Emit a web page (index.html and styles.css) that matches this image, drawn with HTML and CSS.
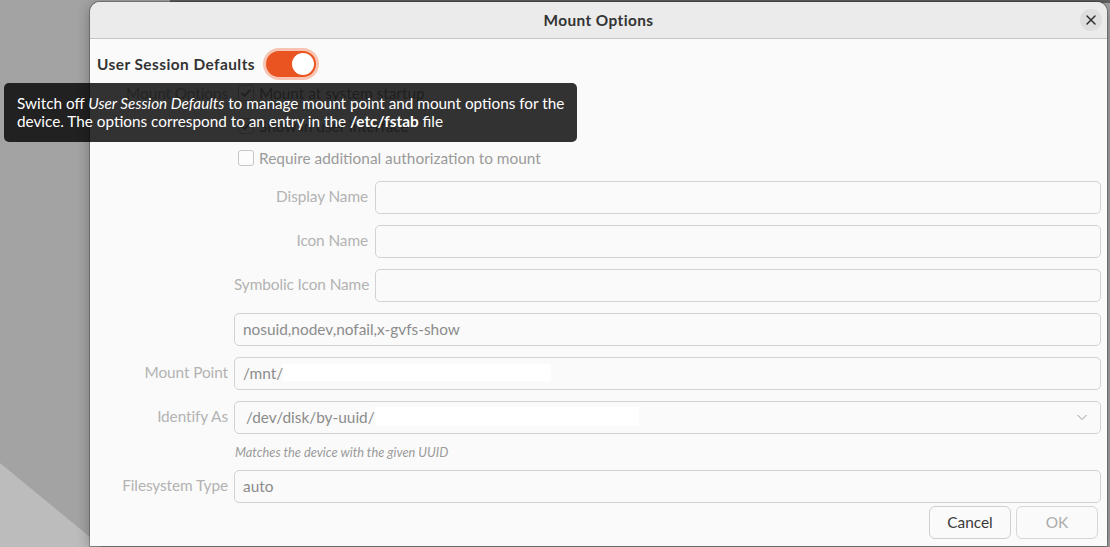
FILE: index.html
```html
<!DOCTYPE html>
<html>
<head>
<meta charset="utf-8">
<title>Mount Options</title>
<link rel="stylesheet" href="styles.css">
</head>
<body>
<div class="desktop">
  <div class="wedge"></div>
  <div class="backwin"></div>

  <div class="dialog">
    <header class="titlebar">
      <span></span>
      <span class="title">Mount Options</span>
      <button class="close" aria-label="Close">
        <svg width="16" height="16" viewBox="0 0 16 16"><path d="M4 4 L12 12 M12 4 L4 12" stroke="#2e2e2e" stroke-width="1.5" fill="none" stroke-linecap="round"/></svg>
      </button>
    </header>

    <div class="content">
      <div class="session-row">
        <span class="session-label">User Session Defaults</span>
        <span class="switch"><span class="knob"></span></span>
      </div>

      <div class="form">
        <div class="label top">Mount Options</div>
        <div class="checks">
          <div class="check"><span class="box"><svg width="14" height="14" viewBox="0 0 14 14"><path d="M2.5 7 L5.5 10 L11.5 3.5" stroke="#8a8a8a" stroke-width="1.5" fill="none"/></svg></span>Mount at system startup</div>
          <div class="check"><span class="box"><svg width="14" height="14" viewBox="0 0 14 14"><path d="M2.5 7 L5.5 10 L11.5 3.5" stroke="#8a8a8a" stroke-width="1.5" fill="none"/></svg></span>Show in user interface</div>
          <div class="check"><span class="box"></span>Require additional authorization to mount</div>
        </div>

        <div></div>
        <div class="named"><span class="label">Display Name</span><span class="entry"></span></div>

        <div></div>
        <div class="named"><span class="label">Icon Name</span><span class="entry"></span></div>

        <div></div>
        <div class="named"><span class="label">Symbolic Icon Name</span><span class="entry"></span></div>

        <div></div>
        <div class="entry">nosuid,nodev,nofail,x-gvfs-show</div>

        <div class="label">Mount Point</div>
        <div class="entry"><span>/mnt/</span><span class="redact r-mnt"></span></div>

        <div class="label">Identify As</div>
        <div class="entry combo"><span>/dev/disk/by-uuid/</span><span class="redact r-uuid"></span><span class="spacer"></span>
          <svg class="chev" width="12" height="12" viewBox="0 0 12 12"><path d="M1.5 4 L6 8.5 L10.5 4" stroke="#9a9a9a" stroke-width="1" fill="none"/></svg>
        </div>

        <div></div>
        <div class="hint">Matches the device with the given UUID</div>

        <div class="label">Filesystem Type</div>
        <div class="entry">auto</div>
      </div>

      <div class="actions">
        <button class="btn">Cancel</button>
        <button class="btn disabled">OK</button>
      </div>
    </div>
  </div>

  <div class="tooltip">Switch off <i>User Session Defaults</i> to manage mount point and mount options for the<br>device. The options correspond to an entry in the <b>/etc/fstab</b> file</div>
</div>
</body>
</html>
```

FILE: styles.css
```css
* { box-sizing: border-box; }
html, body { margin: 0; padding: 0; }
body {
  font-family: Lato, "Liberation Sans", sans-serif;
  font-size: 15.4px;
  overflow: hidden;
}
.desktop {
  position: relative;
  width: 1110px;
  height: 547px;
  background: #a3a3a3;
  overflow: hidden;
}
.wedge {
  position: absolute;
  inset: 0;
  background: #bcbcbc;
  clip-path: polygon(0 463px, 102px 547px, 0 547px);
}
.backwin {
  position: absolute;
  left: 170px;
  right: 0;
  top: 0;
  height: 3px;
  background: #606060;
}
.dialog {
  position: absolute;
  left: 90px;
  top: 2px;
  width: 1017px;
  height: 544px;
  background: #fafafa;
  border-radius: 10px 10px 0 0;
  box-shadow: 0 0 0 1px rgba(0,0,0,0.22), 0 2px 14px rgba(0,0,0,0.32);
  display: flex;
  flex-direction: column;
  overflow: hidden;
}
.titlebar {
  height: 37px;
  flex: none;
  background: #ebebeb;
  border-bottom: 1px solid #c4c4c4;
  display: grid;
  grid-template-columns: 1fr auto 1fr;
  align-items: center;
}
.title {
  font-weight: 700;
  color: #333;
  font-size: 15.4px;
  letter-spacing: 0.4px;
  padding-bottom: 1px;
}
.close {
  justify-self: end;
  margin-right: 5px;
  width: 22px;
  height: 22px;
  border: none;
  border-radius: 50%;
  background: #dedede;
  padding: 0;
  display: flex;
  align-items: center;
  justify-content: center;
}
.content {
  flex: 1;
  display: flex;
  flex-direction: column;
  padding: 11px 6px 0 7px;
}
.session-row {
  display: flex;
  align-items: center;
  height: 28px;
}
.session-label {
  font-weight: 700;
  color: #333;
  letter-spacing: 0.45px;
}
.switch {
  margin-left: 11px;
  width: 50px;
  height: 26px;
  border-radius: 13px;
  background: #e95420;
  box-shadow: 0 0 0 3px #f7c4b1;
  display: flex;
  align-items: center;
  justify-content: flex-end;
  padding: 2px;
}
.knob {
  width: 22px;
  height: 22px;
  border-radius: 50%;
  background: #fff;
}
.form {
  margin-top: 5px;
  display: grid;
  grid-template-columns: 131px 867px;
  column-gap: 6px;
  row-gap: 11px;
  align-items: center;
}
.label {
  text-align: right;
  color: #b3b3b3;
  white-space: nowrap;
  padding-bottom: 3px;
  letter-spacing: -0.1px;
}
.label.top {
  align-self: start;
  line-height: 20px;
  padding-bottom: 0;
}
.checks {
  display: flex;
  flex-direction: column;
  gap: 12.5px;
  padding-left: 4px;
  margin-bottom: 2px;
}
.check {
  height: 20px;
  display: flex;
  align-items: center;
  gap: 5px;
  color: #9a9a9a;
  white-space: nowrap;
}
.box {
  width: 16px;
  height: 16px;
  border: 1px solid #c6c6c6;
  border-radius: 3px;
  background: #fcfcfc;
  display: flex;
  align-items: center;
  justify-content: center;
}
.named {
  display: flex;
  align-items: center;
  gap: 7px;
}
.named .label {
  width: 134px;
  flex: none;
}
.named .entry { flex: 1; }
.entry {
  height: 33px;
  border: 1px solid #d2d2d2;
  border-radius: 5px;
  background: #fafafa;
  padding: 0 8px 2px 8px;
  display: flex;
  align-items: center;
  color: #8c8c8c;
  white-space: nowrap;
}
.redact {
  display: inline-block;
  height: 17px;
  background: #ffffff;
}
.r-mnt { width: 268px; }
.r-uuid { width: 264px; height: 19px; }
.combo { padding: 0 12px 2px 11px; }
.spacer { flex: 1; }
.hint {
  height: 14px;
  line-height: 14px;
  font-size: 12.8px;
  font-style: italic;
  color: #9a9a9a;
  padding-left: 1px;
}
.actions {
  display: flex;
  justify-content: flex-end;
  gap: 5px;
  margin-top: 3px;
  padding-right: 3px;
}
.btn {
  width: 82px;
  height: 33px;
  border: 1px solid #cfcfcf;
  border-radius: 6px;
  background: #fafafa;
  font-family: inherit;
  font-size: 15.4px;
  color: #3a3a3a;
  padding: 0 0 2px 0;
}
.btn.disabled {
  color: #ababab;
  border-color: #d6d6d6;
}
.tooltip {
  position: absolute;
  left: 4px;
  top: 83px;
  width: 573px;
  height: 59px;
  background: rgba(0,0,0,0.8);
  border-radius: 5px;
  color: #fff;
  font-size: 15.3px;
  padding: 11px 13px;
  line-height: 18px;
  white-space: nowrap;
}
```
